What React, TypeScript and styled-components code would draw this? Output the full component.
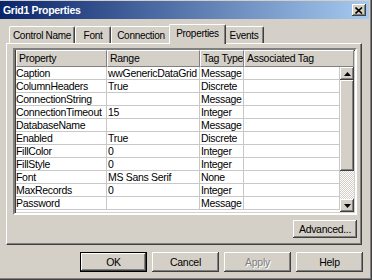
import styled, { createGlobalStyle, css } from 'styled-components';

const GlobalStyle = createGlobalStyle`
  html, body {
    margin: 0;
    padding: 0;
    background: #d4d0c8;
  }
  body {
    font-family: "Liberation Sans", Arial, sans-serif;
    font-size: 10px;
    letter-spacing: -0.3px;
    color: #000;
  }
`;

const raised = css`
  background: #d4d0c8;
  box-shadow: inset -1px -1px 0 #404040, inset 1px 1px 0 #ffffff,
    inset -2px -2px 0 #808080, inset 2px 2px 0 #d4d0c8;
`;

const rows = [
  ['Caption', 'wwGenericDataGrid', 'Message'],
  ['ColumnHeaders', 'True', 'Discrete'],
  ['ConnectionString', '', 'Message'],
  ['ConnectionTimeout', '15', 'Integer'],
  ['DatabaseName', '', 'Message'],
  ['Enabled', 'True', 'Discrete'],
  ['FillColor', '0', 'Integer'],
  ['FillStyle', '0', 'Integer'],
  ['Font', 'MS Sans Serif', 'None'],
  ['MaxRecords', '0', 'Integer'],
  ['Password', '', 'Message'],
];

const tabs = [
  { label: 'Control Name', width: 66 },
  { label: 'Font', width: 36 },
  { label: 'Connection', width: 60 },
  { label: 'Properties', width: 57, active: true },
  { label: 'Events', width: 40 },
];

export default function App() {
  return (
    <>
      <GlobalStyle />
      <Window>
        <TitleBar>
          <span>Grid1 Properties</span>
          <CloseButton>
            <svg width="8" height="7" viewBox="0 0 8 7">
              <path d="M0.5 0.5 L7 6.5 M7 0.5 L0.5 6.5" stroke="#000" strokeWidth="1.6" />
            </svg>
          </CloseButton>
        </TitleBar>
        <Content>
          <TabStrip>
            {tabs.map((t) => (
              <Tab key={t.label} $width={t.width} $active={!!t.active}>
                {t.label}
              </Tab>
            ))}
          </TabStrip>
          <Panel>
            <GridBox>
              <HeaderRow>
                <HeaderCell>Property</HeaderCell>
                <HeaderCell>Range</HeaderCell>
                <HeaderCell>Tag Type</HeaderCell>
                <HeaderCell>Associated Tag</HeaderCell>
              </HeaderRow>
              <BodyArea>
                <Rows>
                  {rows.map((r) => (
                    <Row key={r[0]}>
                      <Cell>{r[0]}</Cell>
                      <Cell $pad={1}>{r[1]}</Cell>
                      <Cell $pad={1}>{r[2]}</Cell>
                      <Cell />
                    </Row>
                  ))}
                </Rows>
                <ScrollBar>
                  <ArrowButton>
                    <svg width="7" height="4" viewBox="0 0 7 4">
                      <polygon points="3.5,0 7,4 0,4" fill="#000" />
                    </svg>
                  </ArrowButton>
                  <Thumb />
                  <Track />
                  <ArrowButton>
                    <svg width="7" height="4" viewBox="0 0 7 4">
                      <polygon points="0,0 7,0 3.5,4" fill="#000" />
                    </svg>
                  </ArrowButton>
                </ScrollBar>
              </BodyArea>
            </GridBox>
            <PanelFooter>
              <Button $width={64} $height={18}>Advanced...</Button>
            </PanelFooter>
          </Panel>
          <ButtonRow>
            <Button $width={67} $height={20} $default>OK</Button>
            <Button $width={67} $height={20}>Cancel</Button>
            <Button $width={67} $height={20} $disabled>Apply</Button>
            <Button $width={67} $height={20}>Help</Button>
          </ButtonRow>
        </Content>
      </Window>
    </>
  );
}

const Window = styled.div`
  width: 372px;
  height: 280px;
  box-sizing: border-box;
  padding: 1px 3px 3px 0;
  background: #d4d0c8;
  box-shadow: inset -1px -1px 0 #404040, inset -2px -2px 0 #808080;
  display: flex;
  flex-direction: column;
`;

const TitleBar = styled.div`
  height: 18px;
  display: flex;
  align-items: center;
  justify-content: space-between;
  padding: 0 3px 0 3px;
  background: linear-gradient(to right, #0a246a, #a6caf0);
  color: #fff;
  font-weight: bold;
  font-size: 10.5px;
  letter-spacing: -0.3px;
`;

const CloseButton = styled.div`
  ${raised};
  width: 14px;
  height: 12px;
  display: flex;
  align-items: center;
  justify-content: center;
`;

const Content = styled.div`
  display: flex;
  flex-direction: column;
  padding: 5px 7px 0 6px;
`;

const TabStrip = styled.div`
  display: flex;
  align-items: flex-end;
  height: 19px;
  padding-left: 3px;
`;

const Tab = styled.div<{ $width: number; $active: boolean }>`
  box-sizing: border-box;
  width: ${(p) => p.$width}px;
  height: ${(p) => (p.$active ? 20 : 17)}px;
  margin: 0 ${(p) => (p.$active ? -2 : 0)}px ${(p) => (p.$active ? -1 : 0)}px;
  position: relative;
  z-index: ${(p) => (p.$active ? 2 : 1)};
  display: flex;
  align-items: ${(p) => (p.$active ? 'flex-start' : 'center')};
  padding-top: ${(p) => (p.$active ? 3 : 0)}px;
  justify-content: center;
  background: #d4d0c8;
  border-top: 1px solid #fff;
  border-left: 1px solid #fff;
  border-right: 1px solid #404040;
  border-radius: 2px 2px 0 0;
  box-shadow: inset -1px 0 0 #808080;
  white-space: nowrap;
`;

const Panel = styled.div`
  box-sizing: border-box;
  height: 202px;
  display: flex;
  flex-direction: column;
  padding: 4px 3px 0 6px;
  border-top: 1px solid #fff;
  border-left: 1px solid #fff;
  border-right: 1px solid #404040;
  border-bottom: 1px solid #404040;
  box-shadow: inset -1px -1px 0 #808080;
`;

const GridBox = styled.div`
  box-sizing: border-box;
  width: 344px;
  height: 167px;
  background: #fff;
  border: 2px solid;
  border-color: #808080 #ffffff #ffffff #808080;
  box-shadow: inset 1px 1px 0 #404040, inset -1px -1px 0 #d4d0c8;
  display: flex;
  flex-direction: column;
  overflow: hidden;
`;

const HeaderRow = styled.div`
  display: grid;
  grid-template-columns: 91px 93px 44px 1fr;
  height: 17px;
  margin: 0 1px 0 1px;
`;

const HeaderCell = styled.div`
  box-sizing: border-box;
  background: #d4d0c8;
  border-top: 1px solid #fff;
  border-left: 1px solid #fff;
  border-right: 1px solid #808080;
  border-bottom: 1px solid #808080;
  padding: 0 2px;
  line-height: 15px;
  white-space: nowrap;
  overflow: hidden;
  font-size: 10.5px;
`;

const BodyArea = styled.div`
  display: flex;
  flex: 1;
  margin: 0 1px 1px 1px;
  min-height: 0;
`;

const Rows = styled.div`
  flex: 1;
  display: flex;
  flex-direction: column;
`;

const Row = styled.div`
  display: grid;
  grid-template-columns: 91px 93px 44px 1fr;
  height: 13px;
  box-sizing: border-box;
  border-bottom: 1px solid #c8c8c8;
`;

const Cell = styled.div<{ $pad?: number }>`
  border-right: 1px solid #c8c8c8;
  padding-left: ${(p) => p.$pad ?? 0}px;
  line-height: 12px;
  white-space: nowrap;
  overflow: hidden;
  font-size: 10.5px;
`;

const ScrollBar = styled.div`
  width: 14px;
  display: flex;
  flex-direction: column;
`;

const ArrowButton = styled.div`
  ${raised};
  height: 13px;
  display: flex;
  align-items: center;
  justify-content: center;
`;

const Thumb = styled.div`
  ${raised};
  height: 91px;
`;

const Track = styled.div`
  flex: 1;
  background: repeating-conic-gradient(#ffffff 0 25%, #d4d0c8 0 50%) 0 0 / 2px 2px;
`;

const PanelFooter = styled.div`
  display: flex;
  justify-content: flex-end;
  width: 344px;
  margin-top: 5px;
`;

const Button = styled.div<{ $width: number; $height: number; $default?: boolean; $disabled?: boolean }>`
  ${raised};
  box-sizing: border-box;
  width: ${(p) => p.$width}px;
  height: ${(p) => p.$height}px;
  display: flex;
  align-items: center;
  justify-content: center;
  font-size: 10.5px;
  color: ${(p) => (p.$disabled ? '#808080' : '#000')};
  text-shadow: ${(p) => (p.$disabled ? '1px 1px 0 #fff' : 'none')};
  ${(p) =>
    p.$default &&
    css`
      border: 1px solid #000;
      box-shadow: inset -1px -1px 0 #404040, inset 1px 1px 0 #ffffff,
        inset -2px -2px 0 #808080;
    `}
`;

const ButtonRow = styled.div`
  display: flex;
  justify-content: flex-end;
  gap: 5px;
  margin-top: 7px;
  margin-right: -1px;
`;
